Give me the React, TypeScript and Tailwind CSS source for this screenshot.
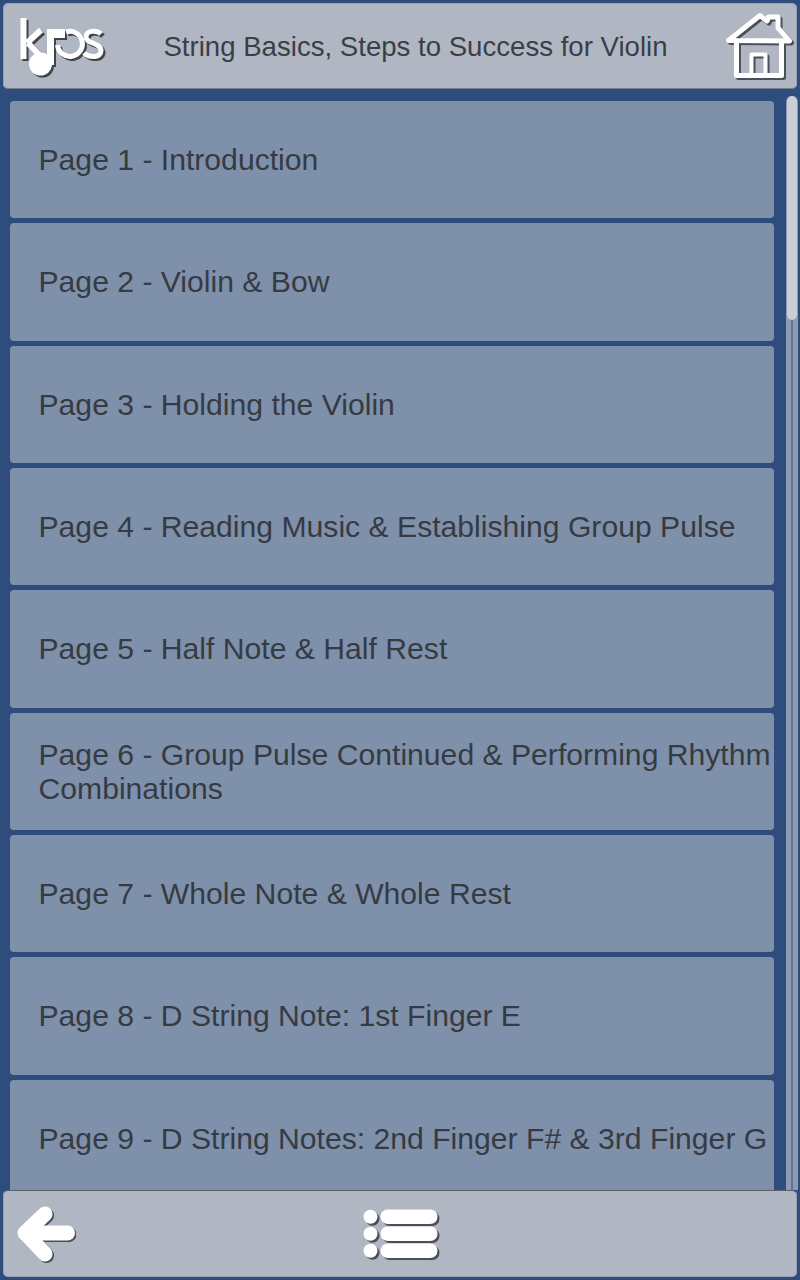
const pages = [
  'Page 1 - Introduction',
  'Page 2 - Violin & Bow',
  'Page 3 - Holding the Violin',
  'Page 4 - Reading Music & Establishing Group Pulse',
  'Page 5 - Half Note & Half Rest',
  'Page 6 - Group Pulse Continued & Performing Rhythm Combinations',
  'Page 7 - Whole Note & Whole Rest',
  'Page 8 - D String Note: 1st Finger E',
  'Page 9 - D String Notes: 2nd Finger F# & 3rd Finger G',
]

function Logo() {
  return (
    <svg width="92" height="66" viewBox="19 12 92 66" className="shrink-0" fill="none">
      {[1, 0].map((o) => {
        const color = o ? '#3f444c' : '#fff'
        return (
          <g key={o} transform={`translate(${o * 2} ${o * 2})`}>
            <rect x="20.5" y="17" width="6" height="41" fill={color} />
            <path d="M27 42 L41 29 M28 42 L42 57" stroke={color} strokeWidth="6" />
            <rect x="47" y="28" width="18" height="9" fill={color} />
            <rect x="47" y="28" width="7" height="36" fill={color} />
            <circle cx="40.5" cy="63" r="11.5" fill={color} />
            <path d="M66 31 A12.5 12.5 0 1 1 57.5 44" stroke={color} strokeWidth="5" />
            <path d="M101 33 C97 29 86 29 86 36 C86 43 101 41 101 50 C101 57 89 57 84 52" stroke={color} strokeWidth="5" />
          </g>
        )
      })}
    </svg>
  )
}

function HomeIcon() {
  return (
    <svg width="70" height="70" viewBox="0 0 70 70" fill="none" strokeLinejoin="round" strokeLinecap="round">
      {[1, 0].map((o) => (
        <g key={o} transform={`translate(${o * 2} ${o * 2})`} stroke={o ? '#4a4f58' : '#fff'}>
          <path d="M3.5 29.5 L35 4.5 L42 10 L43.5 6 L53 6 L53 17 L64.5 30 Z" strokeWidth="5" />
          <path d="M11.5 30 V64.5 H56.5 V30" strokeWidth="5" />
          <path d="M26.5 64.5 V43.5 H40.5 V64.5" strokeWidth="4" />
        </g>
      ))}
    </svg>
  )
}

function BackIcon() {
  return (
    <svg width="64" height="64" viewBox="0 0 64 64" fill="none" strokeLinecap="round" strokeLinejoin="round">
      {[1, 0].map((o) => (
        <g key={o} transform={`translate(${o * 1.5} ${o * 1.5})`} stroke={o ? '#4a4f58' : '#fff'} strokeWidth="15">
          <path d="M33 12 L13 31 L33 52" />
          <path d="M15 31 H55.5" />
        </g>
      ))}
    </svg>
  )
}

function ListIcon() {
  const rows = [1.5, 18.5, 35.5]
  return (
    <svg width="78" height="52" viewBox="0 0 78 52">
      {[1, 0].map((o) => (
        <g key={o} transform={`translate(${o * 2} ${o * 2})`} fill={o ? '#4a4f58' : '#fff'}>
          {rows.map((y) => (
            <g key={y}>
              <circle cx="7.5" cy={y + 7.25} r="7" />
              <rect x="17.5" y={y} width="57" height="14.5" rx="7.25" />
            </g>
          ))}
        </g>
      ))}
    </svg>
  )
}

export default function App() {
  return (
    <div className="flex h-[1280px] w-[800px] flex-col overflow-hidden bg-[#2e4d7c] font-['Liberation_Sans',Arial,sans-serif]">
      {/* Header */}
      <div className="z-10 mx-[3px] mt-[3px] flex h-[86px] shrink-0 items-center justify-between rounded-[5px] border border-[#9aa1ad] border-b-[#7a808a] bg-[#b0b7c3] pl-[15px] pr-[1px]">
        <Logo />
        <h1 className="-ml-[5px] mt-[2px] text-[27.6px] text-[#3a3f46]">String Basics, Steps to Success for Violin</h1>
        <HomeIcon />
      </div>

      {/* Page list */}
      <div className="flex min-h-0 flex-1 pt-[6px]">
        <div className="flex min-w-0 flex-1 flex-col gap-[5px] overflow-hidden pl-[10px] pt-[6px]">
          {pages.map((page) => (
            <div
              key={page}
              className="flex h-[117.33px] w-[764px] shrink-0 items-center rounded-[4px] bg-[#7f90ab] pl-[28.5px] pt-[0.6px] text-[30.15px] leading-[34px] text-[#363b42]"
            >
              {page}
            </div>
          ))}
        </div>
        {/* Scrollbar */}
        <div className="mr-[2px] mt-[1px] flex w-[12px] shrink-0 flex-col rounded-t-[6px] bg-[#8c9ab2] px-[1px]">
          <div className="h-[224px] shrink-0 rounded-[6px] bg-[#c9ced7]" />
          <div className="mx-auto w-[2px] flex-1 bg-[#5f7394]" />
        </div>
      </div>

      {/* Footer */}
      <div className="z-10 mx-[3px] mb-[3px] flex h-[87px] shrink-0 items-center rounded-[5px] border border-[#9aa1ad] border-t-[#5d6470] bg-[#b0b7c3]">
        <div className="ml-[8px]">
          <BackIcon />
        </div>
        <div className="ml-[287px]">
          <ListIcon />
        </div>
      </div>
    </div>
  )
}
